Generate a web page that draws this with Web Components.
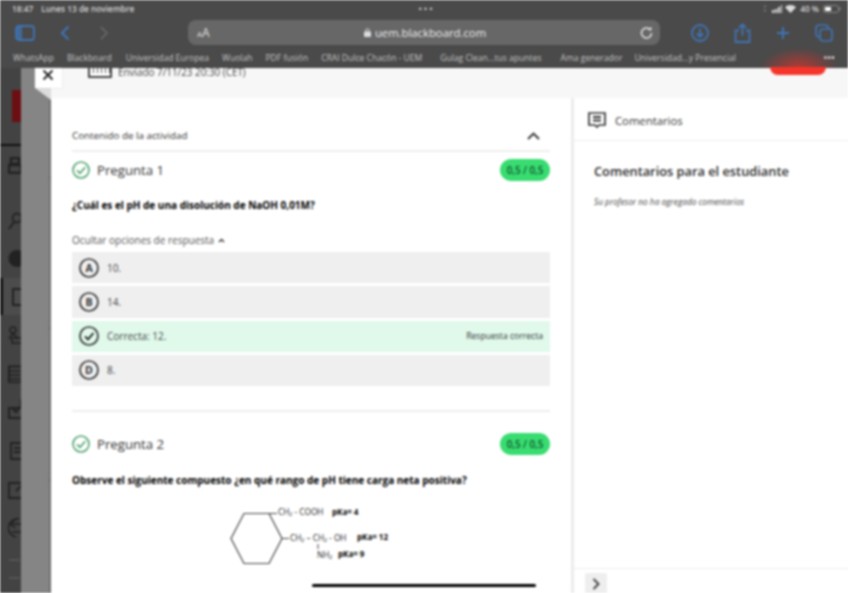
<!DOCTYPE html>
<html lang="es"><head><meta charset="utf-8"><title>Blackboard</title>
<style>
html,body{margin:0;padding:0;height:593px;overflow:hidden;background:#fff}
body{font-family:"Open Sans","Noto Sans",sans-serif}
</style></head><body>
<x-app>
  <x-browser-chrome slot="chrome"></x-browser-chrome>
  <x-side-rail slot="rail"></x-side-rail>
  <x-activity slot="main">
    <x-question title-text="Pregunta 1" score="0,5 / 0,5" prompt="¿Cuál es el pH de una disolución de NaOH 0,01M?">
      <x-answers>
        <x-option letter="A">10.</x-option>
        <x-option letter="B">14.</x-option>
        <x-option correct note="Respuesta correcta">Correcta: 12.</x-option>
        <x-option letter="D">8.</x-option>
      </x-answers>
    </x-question>
    <x-question second title-text="Pregunta 2" score="0,5 / 0,5" prompt="Observe el siguiente compuesto ¿en qué rango de pH tiene carga neta positiva?">
      <x-compound></x-compound>
    </x-question>
  </x-activity>
  <x-comments slot="side"></x-comments>
</x-app>
<script>
const def=(name,html)=>customElements.define(name,class extends HTMLElement{
  constructor(){super();this.attachShadow({mode:'open'});}
  connectedCallback(){this.shadowRoot.innerHTML=html;}
});
const blue='#3f74b5';
def('x-app',`<style>
:host{display:block;position:relative;width:848px;height:593px;overflow:hidden;filter:blur(.8px)}
.body{display:grid;grid-template-columns:51px 1fr;height:525px}
.panel{display:flex;flex-direction:column;min-width:0}
.band{height:30px;background:#f7f7f7;display:flex;align-items:flex-start;position:relative;flex:none}
.sent{display:flex;align-items:flex-start;gap:6px;margin-left:37px;font-size:9.900px;line-height:8px;color:#444;white-space:nowrap}
.cal{width:24px;height:10px;border:solid #444;border-width:0 2px 2px;box-sizing:border-box;background:repeating-linear-gradient(90deg,#fff 0 3px,#555 3px 4px) 0 0/100% 5px no-repeat,#fff;border-radius:0 0 1px 1px}
.red{position:absolute;left:719px;top:-1px;width:56px;height:8px;background:#f5352b;border-radius:0 0 8px 8px}
.glow{position:absolute;left:710px;top:-20px;width:76px;height:20px;background:radial-gradient(ellipse at 50% 100%,rgba(225,50,40,.7),rgba(225,50,40,0) 72%)}
.cols{display:grid;grid-template-columns:520px 3px 1fr;flex:1;min-height:0;background:#fff}
.rule{background:#ececec}
.close{position:absolute;left:35px;top:68px;width:27px;height:20px;box-sizing:border-box;padding:0 2px 6px 0;background:#fff;box-shadow:0 0 1px #bbb;display:flex;align-items:center;justify-content:center;z-index:3}
.fold{position:absolute;left:35px;top:88px;width:16px;height:12px;z-index:2;background:#dcdcdc;clip-path:polygon(0 0,100% 0,100% 100%)}
.home{position:absolute;left:312px;top:584px;width:224px;height:3px;background:#000;border-radius:2px;z-index:4}
</style>
<slot name="chrome"></slot>
<div class="body"><slot name="rail"></slot>
<div class="panel">
 <div class="band"><div class="sent"><span class="cal"></span><span>Enviado 7/11/23 20:30 (CET)</span></div><div class="glow"></div><div class="red"></div></div>
 <div class="cols"><slot name="main"></slot><div class="rule"></div><slot name="side"></slot></div>
</div></div>
<div class="close"><svg width="12" height="12" viewBox="0 0 12 12"><path d="M1.500 1.500l9 9M10.500 1.500l-9 9" stroke="#222" stroke-width="1.800" fill="none"/></svg></div>
<div class="fold"></div>
<div class="home"></div>`);

def('x-browser-chrome',`<style>
:host{display:block;height:68px;background:#4a4a4a;color:#d4d4d4;box-sizing:border-box;overflow:hidden}
.status{height:17px;display:grid;grid-template-columns:1fr auto 1fr;align-items:center;padding:0 7px 1px 12px;font-size:8.300px;font-weight:600}
.l{display:flex;gap:8px;white-space:nowrap}
.dots{letter-spacing:2px;color:#ccc;font-size:9px;line-height:8px}
.r{display:flex;justify-content:flex-end;align-items:center;gap:3px;color:#d4d4d4}
.bar{height:29px;display:grid;grid-template-columns:188px 472px 1fr;align-items:center}
.nav{display:flex;align-items:center;padding-left:15px}
.addr{height:25px;background:#676767;border-radius:8px;display:grid;grid-template-columns:1fr auto 1fr;align-items:center;padding:0 7px 0 9px;color:#cfcfcf;font-size:11.300px}
.aa{font-size:12px;color:#e0e0e0;font-weight:500}.aa small{font-size:8px}
.host{display:flex;align-items:center;gap:4px;color:#eee}
.re{justify-self:end;display:flex}
.tools{display:flex;align-items:center;justify-content:flex-end;gap:25px;padding-right:15px}
.marks{height:22px;display:flex;align-items:center;padding:0 13px;font-size:8.550px;color:#c4c4c4;white-space:nowrap}
.marks span{flex:none}
.more{margin-left:auto;color:#ddd;font-weight:700;letter-spacing:.5px}
svg{display:block}
</style>
<div class="status"><div class="l"><span>18:47</span><span>Lunes 13 de noviembre</span></div><div class="dots">•••</div>
<div class="r"><svg width="4" height="7" viewBox="0 0 4 7"><path d="M2 6a2 2 0 1 1 0-5" stroke="#999" fill="none"/></svg>
<svg width="11" height="8" viewBox="0 0 11 8"><path d="M1 5h2v3H1zM4 4h2v4H4zM7 2h2v6H7zM10 0h1v8h-1z" fill="#ddd"/></svg>
<svg width="11" height="8" viewBox="0 0 11 8"><path d="M5.500 8L0 2.200C3 -.7 8-.7 11 2.200z" fill="#ddd"/></svg>
<span style="margin:0 1px">40 %</span>
<svg width="18" height="8" viewBox="0 0 18 8"><rect x=".5" y=".5" width="15" height="7" rx="2" fill="none" stroke="#888"/><rect x="2" y="2" width="6" height="4" fill="#fff"/><rect x="16.300" y="2.500" width="1.200" height="3" fill="#888"/></svg></div></div>
<div class="bar">
 <div class="nav">
  <svg width="20" height="16" viewBox="0 0 20 16"><rect x="1" y="1" width="18" height="14" rx="3" fill="none" stroke="${blue}" stroke-width="1.800"/><path d="M2 2h5v12H2z" fill="${blue}" opacity=".75"/></svg>
  <svg style="margin-left:25px" width="10" height="16" viewBox="0 0 10 16"><path d="M8.500 1.500L2 8l6.500 6.500" fill="none" stroke="${blue}" stroke-width="2.200"/></svg>
  <svg style="margin-left:30px" width="8" height="14" viewBox="0 0 8 14"><path d="M1 1l6 6-6 6" fill="none" stroke="#6c6c6c" stroke-width="1.500"/></svg>
 </div>
 <div class="addr"><span class="aa"><small>A</small>A</span>
  <span class="host"><svg width="7" height="9" viewBox="0 0 7 9"><rect y="3.500" width="7" height="5.500" rx="1" fill="#ddd"/><path d="M1.800 4V2.500a1.700 1.700 0 0 1 3.400 0V4" fill="none" stroke="#ddd"/></svg>uem.blackboard.com</span>
  <span class="re"><svg width="13" height="13" viewBox="0 0 13 13"><path d="M10.500 4A5 5 0 1 0 11.500 7" fill="none" stroke="#e4e4e4" stroke-width="1.500"/><path d="M8 4.200h3.500V.8z" fill="#e4e4e4"/></svg></span></div>
 <div class="tools">
  <svg width="18" height="18" viewBox="0 0 18 18"><circle cx="9" cy="9" r="8" fill="none" stroke="${blue}" stroke-width="1.800"/><path d="M9 4.500v8M5.800 9.500L9 12.800l3.200-3.300" fill="none" stroke="${blue}" stroke-width="1.800"/></svg>
  <svg width="17" height="20" viewBox="0 0 17 20"><path d="M5 7.500H1.500v11.500h14V7.500H12M8.500 12.500V1.500M5 4.800l3.500-3.500L12 4.800" fill="none" stroke="${blue}" stroke-width="1.800"/></svg>
  <svg width="14" height="14" viewBox="0 0 14 14"><path d="M7 1v12M1 7h12" stroke="${blue}" stroke-width="2"/></svg>
  <svg width="18" height="18" viewBox="0 0 18 18"><rect x="1" y="1" width="12" height="12" rx="3" fill="none" stroke="${blue}" stroke-width="1.700"/><rect x="5" y="5" width="12" height="12" rx="3" fill="#4a4a4a" stroke="${blue}" stroke-width="1.700"/></svg>
 </div>
</div>
<div class="marks">
<span>WhatsApp</span><span style="margin-left:13px">Blackboard</span><span style="margin-left:14px">Universidad Europea</span><span style="margin-left:13px">Wuolah</span><span style="margin-left:13px">PDF fusión</span><span style="margin-left:13px">CRAI Dulce Chacón - UEM</span><span style="margin-left:18px">Gulag Clean...tus apuntes</span><span style="margin-left:19px">Ama generador</span><span style="margin-left:12px">Universidad...y Presencial</span><span class="more">•••</span></div>`);

const ic='#222';
def('x-side-rail',`<style>
:host{display:block;height:100%;overflow:hidden;position:relative;background:repeating-linear-gradient(180deg,transparent 0 108px,#666 108px 111px,transparent 111px 151.500px) 49px 0/2px 100% no-repeat,linear-gradient(90deg,#858585 0 49px,#6e6e6e 49px 51px)}
.dark{width:21px;height:100%;background:#434343;display:flex;flex-direction:column;overflow:hidden}
.red{height:32px;margin:22px 0 0 12px;background:#6b0f12;flex:none}
.line{height:2px;background:#111;margin-top:22px;flex:none}
svg{flex:none;margin-left:8px;display:block}
.act{border-left:3px solid #111;margin-top:11px;flex:none;height:37px;display:flex;align-items:center;padding-left:9px;box-sizing:border-box;background:#4c4c4c}
.act svg{margin:0}
.faint{flex:none;height:2px;width:11px;background:#555;margin-left:9px}
</style>
<div class="dark">
<div class="red"></div><div class="line"></div>
<svg style="margin-top:11px" width="14" height="17" viewBox="0 0 14 17"><path d="M3 1h8v6H3zM1 8h12v8H1z" fill="none" stroke="${ic}" stroke-width="2.500"/></svg>
<svg style="margin-top:38px" width="14" height="18" viewBox="0 0 14 18"><circle cx="9" cy="6" r="4.500" fill="none" stroke="${ic}" stroke-width="1.800"/><path d="M6 10L1 17" stroke="${ic}" stroke-width="2"/></svg>
<svg style="margin-top:20px" width="14" height="17" viewBox="0 0 14 17"><circle cx="9" cy="8.500" r="8.500" fill="${ic}"/></svg>
<div class="act"><svg width="14" height="18" viewBox="0 0 14 18"><rect x="1" y="1" width="13" height="16" fill="none" stroke="${ic}" stroke-width="2"/></svg></div>
<svg style="margin-top:11px" width="14" height="18" viewBox="0 0 14 18"><circle cx="5" cy="4" r="3" fill="none" stroke="${ic}" stroke-width="1.600"/><path d="M1 13l4-6 5 6M4 12h10v5H4z" fill="none" stroke="${ic}" stroke-width="1.600"/></svg>
<svg style="margin-top:21px" width="14" height="18" viewBox="0 0 14 18"><rect x="1" y="1.500" width="13" height="16" fill="none" stroke="${ic}" stroke-width="2"/><path d="M1 6h13M1 10h13M1 14h13" stroke="${ic}" stroke-width="1.500"/></svg>
<svg style="margin-top:16px" width="14" height="20" viewBox="0 0 14 20"><path d="M1 9h13v10H1zM4 9l4 4 5-6M13 7V0" fill="none" stroke="${ic}" stroke-width="2"/></svg>
<svg style="margin-top:23px" width="14" height="18" viewBox="0 0 14 18"><path d="M3 1h11v16H3zM6 6h8M6 10h8" fill="none" stroke="${ic}" stroke-width="1.800"/></svg>
<svg style="margin-top:22px" width="14" height="17" viewBox="0 0 14 17"><path d="M14 1H1v15h13M8 9l5-5" fill="none" stroke="${ic}" stroke-width="1.800"/></svg>
<svg style="margin-top:19px" width="14" height="20" viewBox="0 0 14 20"><path d="M14 6H4M7 2L2 6l5 4M14 14H4M11 1a9 9 0 0 0-3 18" fill="none" stroke="${ic}" stroke-width="1.600"/></svg>
<div class="faint" style="margin-top:21px"></div><div class="faint" style="margin-top:16px"></div>
</div>`);

def('x-activity',`<style>
:host{display:block;padding:0 21px;background:#fff;overflow:hidden;min-height:0}
.head{height:54px;box-sizing:border-box;padding:30px 10px 6px 0;display:flex;justify-content:space-between;align-items:center;border-bottom:2px solid #eee;font-size:9.800px;color:#333;font-weight:500;white-space:nowrap}
.head span{line-height:18px}
</style>
<div class="head"><span>Contenido de la actividad</span><svg width="13" height="8" viewBox="0 0 13 8"><path d="M1 7l5.500-5.500L12 7" fill="none" stroke="#333" stroke-width="1.900"/></svg></div>
<slot></slot>`);

customElements.define('x-question',class extends HTMLElement{
 constructor(){super();this.attachShadow({mode:'open'});}
 connectedCallback(){
  const second=this.hasAttribute('second');
  this.shadowRoot.innerHTML=`<style>
:host{display:block;${second?'border-top:2px solid #eee;margin-top:24px;padding-top:21px':'padding-top:7px'}}
.row{display:flex;align-items:center;justify-content:space-between;height:22px}
.t{display:flex;align-items:center;gap:7px;font-size:13.200px;color:#333;font-weight:500}
.badge{width:50px;height:22px;border-radius:11px;background:#38dc70;color:#0f5a30;font-size:9.800px;font-weight:600;display:flex;align-items:center;justify-content:center;white-space:nowrap}
.p{margin:${second?'18px':'17px'} 0 0;font-size:10px;line-height:14px;font-weight:700;color:#000;white-space:nowrap}
svg{display:block}
</style>
<div class="row"><div class="t"><svg width="18" height="18" viewBox="0 0 18 18"><circle cx="9" cy="9" r="8" fill="none" stroke="#4fa46f" stroke-width="1.600"/><path d="M5 9.300l3 3 5.200-6" fill="none" stroke="#4fa46f" stroke-width="1.700"/></svg><span>${this.getAttribute('title-text')}</span></div><div class="badge">${this.getAttribute('score')}</div></div>
<p class="p">${this.getAttribute('prompt')}</p><slot></slot>`;
 }
});

def('x-answers',`<style>
:host{display:block}
.tog{margin-top:21px;height:14px;line-height:14px;font-size:10px;color:#555;display:flex;align-items:center;gap:4px}
.list{margin-top:5px;display:flex;flex-direction:column;gap:3px}
</style>
<div class="tog"><span>Ocultar opciones de respuesta</span><svg width="7" height="5" viewBox="0 0 7 5"><path d="M1 4l2.500-2.500L6 4" fill="none" stroke="#333" stroke-width="1.400"/></svg></div>
<div class="list"><slot></slot></div>`);

customElements.define('x-option',class extends HTMLElement{
 constructor(){super();this.attachShadow({mode:'open'});}
 connectedCallback(){
  const c=this.hasAttribute('correct');
  const mark=c?`<path d="M6 10.300l3 3 5.500-6.300" fill="none" stroke="#222" stroke-width="1.900"/>`:`<text x="10" y="13.800" text-anchor="middle" font-family="Open Sans" font-size="10.500" font-weight="700" fill="#333">${this.getAttribute('letter')}</text>`;
  this.shadowRoot.innerHTML=`<style>
:host{display:flex;box-sizing:border-box;height:31.250px;align-items:center;padding:0 7px;background:${c?'#e0f9eb':'#efefef'};font-size:10px;color:#444;gap:8px;white-space:nowrap}
svg{flex:none;display:block}
.n{margin-left:auto;font-size:8.600px;color:#333}
</style>
<svg width="20" height="20" viewBox="0 0 20 20"><circle cx="10" cy="10" r="9" fill="none" stroke="#333" stroke-width="1.700"/>${mark}</svg><slot></slot>${c?`<span class="n">${this.getAttribute('note')}</span>`:''}`;
 }
});

def('x-compound',`<style>
:host{display:block;margin:19px 0 0 158px}
svg{display:block}
text{font-family:"Open Sans",sans-serif;font-size:8.300px;fill:#222}
.b{font-weight:700;fill:#000;font-size:8px}
</style>
<svg width="180" height="62" viewBox="0 -7 180 62">
<path d="M1 25.500L14 .5H39L52 25.500L39 50.500H14Z" fill="none" stroke="#444" stroke-width="1.200"/>
<path d="M39 .5H47M52 25.500H59" stroke="#444" stroke-width="1.200"/>
<text x="48" y="2">CH₂ - COOH</text><text class="b" x="102" y="2">pKa= 4</text>
<text x="60" y="27.500">CH₂ – CH₂ - OH</text><text class="b" x="127" y="27">pKa= 12</text>
<path d="M88 31v5" stroke="#444"/>
<text x="87" y="45">NH₂</text><text class="b" x="108" y="44">pKa= 9</text>
</svg>`);

def('x-comments',`<style>
:host{display:flex;flex-direction:column;min-height:0;background:#fff}
.h{height:43px;padding:2px 0 0 14px;border-bottom:1px solid #eee;box-sizing:border-box;display:flex;align-items:center;gap:9px;font-size:11.300px;color:#333;font-weight:500;flex:none}
.b{flex:1;padding:21px 20px 0}
h2{margin:0;font-size:12.800px;line-height:18px;font-weight:600;color:#2c2c2c;white-space:nowrap}
p{margin:16px 0 0;font-size:8.300px;line-height:12px;font-style:italic;color:#444;white-space:nowrap}
.f{height:25px;border-top:1px solid #eee;flex:none;padding:4px 0 0 11px;box-sizing:border-box}
.btn{width:22px;height:21px;background:#eee;border-radius:2px;display:flex;align-items:center;justify-content:center}
</style>
<div class="h"><svg width="18" height="18" viewBox="0 0 18 18"><path d="M1 2h16v12h-6l-2 2-2-2H1z" fill="none" stroke="#333" stroke-width="1.700"/><path d="M5 6h8M5 9.500h8" stroke="#333" stroke-width="1.900"/></svg><span>Comentarios</span></div>
<div class="b"><h2>Comentarios para el estudiante</h2><p>Su profesor no ha agregado comentarios</p></div>
<div class="f"><div class="btn"><svg width="8" height="12" viewBox="0 0 8 12"><path d="M1.500 1l5 5-5 5" fill="none" stroke="#444" stroke-width="1.900"/></svg></div></div>`);
</script>
</body></html>
